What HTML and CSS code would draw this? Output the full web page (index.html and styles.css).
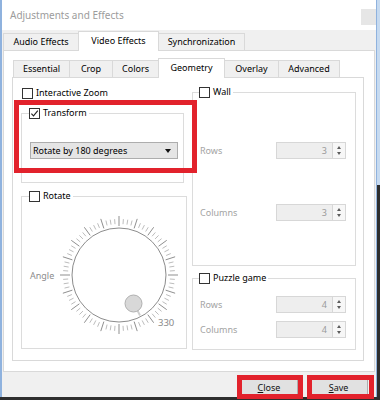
FILE: index.html
```html
<!DOCTYPE html>
<html lang="en">

<head>
    <meta charset="UTF-8">
    <meta name="viewport" content="width=device-width, initial-scale=1.0">
    <title>Adjustments and Effects</title>
    <link rel="stylesheet" href="styles.css">
</head>

<body>
    <div class="window">
        <div class="titlebar">
            <span class="title">Adjustments and Effects</span>
            <span class="title-btn"></span>
        </div>
        <div class="dialog">
            <div class="tabs main-tabs">
                <div class="tab">Audio Effects</div>
                <div class="tab active">Video Effects</div>
                <div class="tab">Synchronization</div>
            </div>
            <div class="pane outer-pane">
                <div class="tabs sub-tabs">
                    <div class="tab">Essential</div>
                    <div class="tab">Crop</div>
                    <div class="tab">Colors</div>
                    <div class="tab active">Geometry</div>
                    <div class="tab">Overlay</div>
                    <div class="tab">Advanced</div>
                </div>
                <div class="pane geometry">
                    <div class="col col-left">
                        <div class="check zoom-check"><span class="box"></span>Interactive Zoom</div>

                        <fieldset class="group transform">
                            <legend>
                                <span class="check">
                                    <span class="box">
                                        <svg viewBox="0 0 9 9" width="9" height="9"><path d="M1.4 4.6 L3.5 6.9 L7.8 1.6" fill="none" stroke="#222" stroke-width="1.1"/></svg>
                                    </span>Transform
                                </span>
                            </legend>
                            <div class="combo"><span>Rotate by 180 degrees</span><span class="combo-arrow"></span></div>
                        </fieldset>

                        <fieldset class="group rotate">
                            <legend><span class="check"><span class="box"></span>Rotate</span></legend>
                            <div class="angle-row">
                                <span class="dial-label">Angle</span>
                                <svg class="dial" width="120" height="120" viewBox="0 0 120 120">
                                    <g id="dial-ticks"></g>
                                    <circle cx="60" cy="60" r="47" fill="#fff" stroke="#8c8c8c" stroke-width="1"/>
                                    <line x1="78" y1="94.5" x2="81" y2="100.5" stroke="#cfcfcf" stroke-width="2"/>
                                    <circle cx="74.5" cy="88.5" r="8.5" fill="#d8d8d8" stroke="#b0b0b0" stroke-width="1"/>
                                    <text class="dial-value" x="99" y="111">330</text>
                                </svg>
                            </div>
                        </fieldset>
                    </div>

                    <div class="col col-right">
                        <fieldset class="group wall">
                            <legend><span class="check"><span class="box"></span>Wall</span></legend>
                            <div class="group-body wall-body">
                                <div class="field">
                                    <span class="field-label">Rows</span>
                                    <div class="spin"><span class="spin-value">3</span><span class="spin-arrows"><i class="up"></i><i class="down"></i></span></div>
                                </div>
                                <div class="field">
                                    <span class="field-label">Columns</span>
                                    <div class="spin"><span class="spin-value">3</span><span class="spin-arrows"><i class="up"></i><i class="down"></i></span></div>
                                </div>
                            </div>
                        </fieldset>

                        <fieldset class="group puzzle">
                            <legend><span class="check"><span class="box"></span>Puzzle game</span></legend>
                            <div class="group-body puzzle-body">
                                <div class="field">
                                    <span class="field-label">Rows</span>
                                    <div class="spin"><span class="spin-value">4</span><span class="spin-arrows"><i class="up"></i><i class="down"></i></span></div>
                                </div>
                                <div class="field">
                                    <span class="field-label">Columns</span>
                                    <div class="spin"><span class="spin-value">4</span><span class="spin-arrows"><i class="up"></i><i class="down"></i></span></div>
                                </div>
                            </div>
                        </fieldset>
                    </div>
                </div>
            </div>
            <div class="buttons">
                <button class="btn btn-close"><u>C</u>lose</button>
                <button class="btn btn-save"><u>S</u>ave</button>
            </div>
        </div>
    </div>

    <!-- red highlight boxes drawn over the dialog -->
    <div class="mark mark-transform"></div>
    <div class="mark mark-close"></div>
    <div class="mark mark-save"></div>

    <script>
        const ticks = document.getElementById('dial-ticks');
        const ns = 'http://www.w3.org/2000/svg';

        for (let i = 0; i < 80; i++) {
            const major = i % 4 === 0;
            const a = i * Math.PI * 2 / 80;
            const r1 = major ? 49 : 51;
            const r2 = major ? 59 : 56;
            const line = document.createElementNS(ns, 'line');
            line.setAttribute('x1', (60 + r1 * Math.sin(a)).toFixed(2));
            line.setAttribute('y1', (60 - r1 * Math.cos(a)).toFixed(2));
            line.setAttribute('x2', (60 + r2 * Math.sin(a)).toFixed(2));
            line.setAttribute('y2', (60 - r2 * Math.cos(a)).toFixed(2));
            line.setAttribute('class', major ? 'tick major' : 'tick');
            ticks.appendChild(line);
        }
    </script>
</body>

</html>
```

FILE: styles.css
```css
* {
    box-sizing: border-box;
}

body {
    margin: 0;
    width: 380px;
    height: 400px;
    overflow: hidden;
    position: relative;
    background: linear-gradient(#c6daf0 0, #c6daf0 185px, #2e2e2e 185px);
    font-family: "Noto Sans", "Open Sans", sans-serif;
    font-size: 9px;
    color: #000;
}

.window {
    width: 377px;
    height: 397px;
    border-left: 2px solid #8fb2de;
    border-right: 1px solid #8fb2de;
    background: #f0f0f0;
    display: flex;
    flex-direction: column;
}

.titlebar {
    height: 30px;
    flex: none;
    background: #fff;
    display: flex;
    justify-content: space-between;
    align-items: flex-start;
}

.title {
    padding: 10px 0 0 8px;
    font-size: 10px;
    line-height: 10px;
    color: #9c9c9c;
}

.title-btn {
    width: 15px;
    height: 16px;
    margin-top: 9px;
    background: #e6e6e6;
}

.dialog {
    flex: 1;
    display: flex;
    flex-direction: column;
    padding: 0 1px;
}

/* tab strips */

.tabs {
    display: flex;
    align-items: flex-end;
    height: 20px;
    margin-bottom: -1px;
    flex: none;
}

.main-tabs {
    margin-top: 1px;
}

.sub-tabs {
    padding-left: 1px;
}

.tab {
    height: 18px;
    padding-bottom: 2px;
    margin-right: -1px;
    border: 1px solid #d9d9d9;
    border-bottom: none;
    background: #f0f0f0;
    display: flex;
    align-items: center;
    justify-content: center;
    white-space: nowrap;
}

.tab.active {
    height: 20px;
    background: #fff;
    position: relative;
    z-index: 1;
}

.main-tabs .tab:nth-child(1) { width: 76px; }
.main-tabs .tab:nth-child(2) { width: 81px; }
.main-tabs .tab:nth-child(3) { width: 87px; }

.sub-tabs .tab:nth-child(1) { width: 57px; }
.sub-tabs .tab:nth-child(2) { width: 44px; }
.sub-tabs .tab:nth-child(3) { width: 47px; }
.sub-tabs .tab:nth-child(4) { width: 67px; }
.sub-tabs .tab:nth-child(5) { width: 55px; }
.sub-tabs .tab:nth-child(6) { width: 62px; }

.pane {
    background: #fff;
    border: 1px solid #d9d9d9;
}

.outer-pane {
    height: 322px;
    flex: none;
    display: flex;
    flex-direction: column;
    padding: 7px 10px 10px 8px;
}

.geometry {
    flex: 1;
    display: flex;
    gap: 5px;
    padding: 9px 7px 0 8px;
}

.col {
    display: flex;
    flex-direction: column;
}

.col-left {
    width: 166px;
}

.col-right {
    flex: 1;
}

/* checkboxes */

.check {
    display: flex;
    align-items: center;
    gap: 3px;
    height: 12px;
    line-height: 12px;
    white-space: nowrap;
}

.box {
    width: 11px;
    height: 11px;
    border: 1px solid #333;
    background: #fff;
    display: flex;
    align-items: center;
    justify-content: center;
}

.box svg {
    display: block;
}

.zoom-check {
    margin-left: 1px;
}

/* group boxes */

.group {
    margin: 0;
    min-width: 0;
    border: 1px solid #dcdcdc;
}

.group legend {
    padding: 0 2px 0 0;
    margin-left: -1px;
}

.transform {
    width: 163px;
    margin-top: 8px;
    padding: 23px 5px 23px 8px;
}

.combo {
    height: 17px;
    border: 1px solid #adadad;
    background: #e5e5e5;
    display: flex;
    align-items: center;
    justify-content: space-between;
    padding: 0 6px 0 2px;
    white-space: nowrap;
}

.combo-arrow {
    border-left: 3px solid transparent;
    border-right: 3px solid transparent;
    border-top: 4px solid #111;
}

.rotate {
    margin-top: 7px;
    padding: 13px 6px 13px 8px;
}

.angle-row {
    display: flex;
    align-items: center;
}

.dial-label {
    width: 29px;
    color: #8c8c8c;
}

.dial {
    display: block;
}

.tick {
    stroke: #bdbdbd;
    stroke-width: 1;
}

.tick.major {
    stroke: #8f8f8f;
}

.dial-value {
    font-family: "Noto Sans", sans-serif;
    font-size: 9.5px;
    fill: #8a8a8a;
}

.wall {
    margin-top: -1px;
    padding: 0 9px 0 7px;
}

.puzzle {
    margin-top: 6px;
    padding: 12px 9px 11px 7px;
}

.group-body {
    display: flex;
    flex-direction: column;
}

.wall-body {
    height: 167px;
    justify-content: space-evenly;
}

.puzzle-body {
    gap: 8px;
}

.field {
    height: 17px;
    display: flex;
    align-items: center;
    justify-content: space-between;
}

.field-label {
    color: #a3a3a3;
}

.spin {
    width: 70px;
    height: 17px;
    border: 1px solid #d7d7d7;
    background: #eeeeee;
    display: flex;
}

.spin-value {
    flex: 1;
    text-align: right;
    padding-right: 5px;
    line-height: 15px;
    color: #9a9a9a;
}

.spin-arrows {
    width: 13px;
    border-left: 1px solid #d7d7d7;
    background: #f7f7f7;
    display: flex;
    flex-direction: column;
    align-items: center;
    justify-content: center;
    gap: 3px;
}

.spin-arrows i {
    display: block;
    border-left: 2.5px solid transparent;
    border-right: 2.5px solid transparent;
}

.spin-arrows .up {
    border-bottom: 3px solid #5c5c5c;
}

.spin-arrows .down {
    border-top: 3px solid #5c5c5c;
}

/* bottom buttons */

.buttons {
    flex: 1;
    display: flex;
    justify-content: flex-end;
    align-items: flex-start;
    gap: 11px;
    padding: 6px 7px 0 0;
}

.btn {
    height: 18px;
    padding: 0;
    border: 1px solid #adadad;
    background: #e1e1e1;
    font: inherit;
    color: #111;
}

.btn-close {
    width: 58px;
}

.btn-save {
    width: 59px;
}

/* annotation boxes */

.mark {
    position: absolute;
    border: 5px solid #e2222c;
}

.mark-transform {
    left: 14px;
    top: 100px;
    width: 183px;
    height: 73px;
}

.mark-close {
    left: 237px;
    top: 375px;
    width: 66px;
    height: 24px;
}

.mark-save {
    left: 307px;
    top: 375px;
    width: 67px;
    height: 24px;
}
```
